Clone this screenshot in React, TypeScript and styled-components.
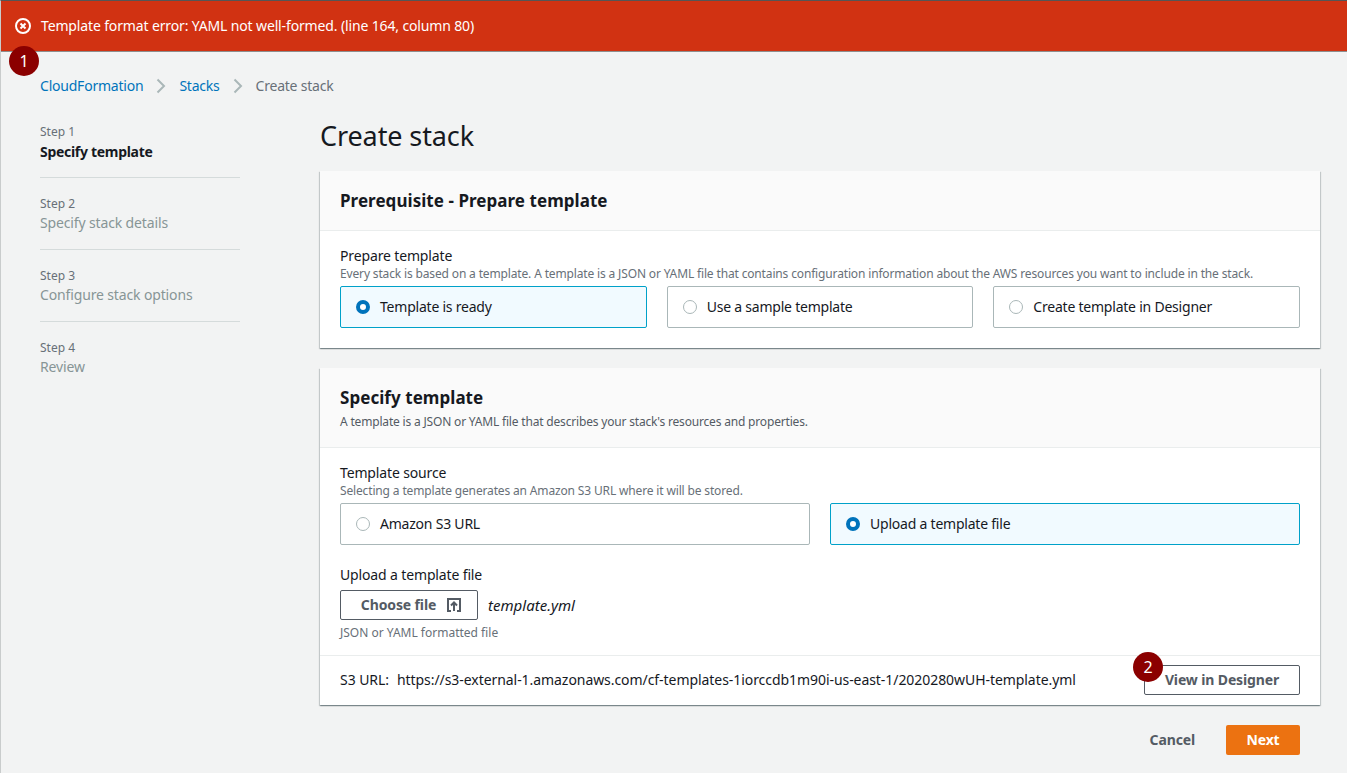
import styled, { createGlobalStyle } from "styled-components";

const GlobalStyle = createGlobalStyle`
  html, body {
    margin: 0;
    padding: 0;
    background: #f2f3f3;
  }
  body {
    font-family: "Noto Sans", "Open Sans", sans-serif;
    font-size: 14px;
    line-height: 20px;
    letter-spacing: -0.14px;
    color: #16191f;
    overflow: hidden;
  }
`;

const Page = styled.div`
  position: relative;
  width: 1347px;
  height: 773px;
  box-sizing: border-box;
  border-top: 1px solid #555;
  border-left: 1px solid #c9cccc;
  overflow: hidden;
`;

const Banner = styled.div`
  height: 51px;
  box-sizing: border-box;
  margin-left: -1px;
  padding-left: 15px;
  display: flex;
  align-items: center;
  gap: 10px;
  background: #d13212;
  border-bottom: 1px solid #8e8e8e;
  color: #fff;
`;

const Badge = styled.div<{ $left: number; $top: number }>`
  position: absolute;
  left: ${(p) => p.$left}px;
  top: ${(p) => p.$top}px;
  width: 30px;
  height: 30px;
  border-radius: 50%;
  background: #8b0000;
  color: #fff;
  font-size: 16px;
  display: flex;
  align-items: center;
  justify-content: center;
`;

const Crumbs = styled.nav`
  height: 20px;
  margin-top: 24px;
  padding-left: 39px;
  display: flex;
  align-items: center;
  letter-spacing: -0.22px;
`;

const CrumbLink = styled.a`
  color: #0073bb;
`;

const CrumbCurrent = styled.span`
  color: #687078;
`;

const CrumbSep = styled.svg`
  width: 16px;
  height: 16px;
  margin: 0 10px;
  fill: none;
  stroke: #aab7b8;
  stroke-width: 2;
`;

const Columns = styled.div`
  display: flex;
  margin-top: 15px;
  padding-left: 39px;
`;

const Steps = styled.ol`
  list-style: none;
  width: 200px;
  margin: 11px 80px 0 0;
  padding: 0;
`;

const StepItem = styled.li`
  height: 56px;
  box-sizing: border-box;
  margin-bottom: 16px;
  &:not(:last-child) {
    border-bottom: 1px solid #d5dbdb;
  }
`;

const StepNum = styled.div`
  font-size: 12px;
  line-height: 20px;
  letter-spacing: 0;
  color: #687078;
`;

const StepName = styled.div<{ $active?: boolean }>`
  margin-top: ${(p) => (p.$active ? 0 : -1)}px;
  color: ${(p) => (p.$active ? "#16191f" : "#879596")};
  font-weight: ${(p) => (p.$active ? 700 : 400)};
  letter-spacing: ${(p) => (p.$active ? "-0.3px" : "-0.14px")};
`;

const Main = styled.main`
  width: 1000px;
`;

const Title = styled.h1`
  margin: 5px 0 0;
  height: 55px;
  font-size: 27px;
  line-height: 40px;
  font-weight: 400;
  letter-spacing: -0.1px;
`;

const Card = styled.section`
  background: #fff;
  box-shadow: 0 1px 1px 0 rgba(0, 28, 36, 0.3), 1px 1px 1px 0 rgba(0, 28, 36, 0.15),
    -1px 1px 1px 0 rgba(0, 28, 36, 0.15);
  margin-bottom: 20px;
`;

const CardHeader = styled.header<{ $withDesc?: boolean }>`
  background: #fafafa;
  border-bottom: 1px solid #eaeded;
  padding: 19px 20px ${(p) => (p.$withDesc ? 15 : 18)}px;
`;

const CardTitle = styled.h2`
  margin: 0;
  font-size: 17px;
  line-height: 22px;
  font-weight: 700;
  letter-spacing: 0.05px;
`;

const CardDesc = styled.p`
  margin: 3px 0 0;
  font-size: 12px;
  line-height: 20px;
  letter-spacing: -0.18px;
  color: #545b64;
`;

const CardBody = styled.div<{ $tight?: boolean }>`
  padding: 15px 20px ${(p) => (p.$tight ? 15 : 20)}px;
`;

const FieldLabel = styled.div`
  line-height: 20px;
  margin-bottom: 1px;
`;

const UploadLabel = styled(FieldLabel)`
  margin: 20px 0 0;
`;

const FieldHint = styled.div`
  font-size: 12px;
  line-height: 14px;
  letter-spacing: -0.15px;
  color: #687078;
`;

const Tiles = styled.div<{ $cols: number }>`
  display: grid;
  grid-template-columns: repeat(${(p) => p.$cols}, 1fr);
  gap: 20px;
  margin-top: 5px;
`;

const Tile = styled.label<{ $on?: boolean }>`
  height: 42px;
  box-sizing: border-box;
  padding-left: 15px;
  display: flex;
  align-items: center;
  gap: 10px;
  letter-spacing: -0.22px;
  border: 1px solid ${(p) => (p.$on ? "#00a1c9" : "#aab7b8")};
  border-radius: 2px;
  background: ${(p) => (p.$on ? "#f1faff" : "#fff")};
`;

const Radio = styled.span<{ $on?: boolean }>`
  width: 14px;
  height: 14px;
  box-sizing: border-box;
  border-radius: 50%;
  background: #fff;
  border: ${(p) => (p.$on ? "4px solid #0073bb" : "1px solid #aab7b8")};
`;

const UploadRow = styled.div`
  display: flex;
  align-items: center;
  gap: 10px;
  margin-top: 5px;
`;

const OutlineButton = styled.button`
  height: 30px;
  box-sizing: border-box;
  background: #fff;
  border: 1px solid #545b64;
  border-radius: 2px;
  color: #545b64;
  font: 700 14px/20px "Noto Sans", "Open Sans", sans-serif;
  letter-spacing: -0.13px;
  padding: 0;
  display: flex;
  align-items: center;
  justify-content: center;
`;

const ChooseButton = styled(OutlineButton)`
  width: 138px;
  gap: 10px;
  padding-left: 5px;
`;

const DesignerButton = styled(OutlineButton)`
  width: 156px;
`;

const FileName = styled.span`
  font-size: 15px;
  font-style: italic;
  letter-spacing: 0;
`;

const UploadHint = styled(FieldHint)`
  margin-top: 6px;
  letter-spacing: 0;
`;

const UrlRow = styled.div`
  border-top: 1px solid #eaeded;
  height: 50px;
  box-sizing: border-box;
  padding: 0 20px 2px;
  display: flex;
  align-items: center;
  justify-content: space-between;
  letter-spacing: -0.06px;
`;

const UrlLabel = styled.span`
  margin-right: 8px;
`;

const Actions = styled.div`
  display: flex;
  justify-content: flex-end;
  align-items: center;
  gap: 31px;
  padding-right: 20px;
`;

const CancelButton = styled.button`
  border: 0;
  background: none;
  padding: 0;
  color: #545b64;
  font: 700 14px/20px "Noto Sans", "Open Sans", sans-serif;
  letter-spacing: -0.13px;
`;

const NextButton = styled.button`
  width: 74px;
  height: 30px;
  border: 0;
  border-radius: 2px;
  background: #ec7211;
  color: #fff;
  font: 700 14px/20px "Noto Sans", "Open Sans", sans-serif;
  letter-spacing: -0.13px;
  padding: 0;
`;

const steps = [
  { num: "Step 1", name: "Specify template", active: true },
  { num: "Step 2", name: "Specify stack details" },
  { num: "Step 3", name: "Configure stack options" },
  { num: "Step 4", name: "Review" },
];

function Chevron() {
  return (
    <CrumbSep viewBox="0 0 16 16">
      <path d="M4.5 1.5L11 8l-6.5 6.5" />
    </CrumbSep>
  );
}

export default function App() {
  return (
    <Page>
      <GlobalStyle />
      <Banner>
        <svg width="16" height="16" viewBox="0 0 16 16" fill="none" stroke="#fff" strokeWidth="2">
          <circle cx="8" cy="8" r="7" />
          <path d="M5.5 5.5l5 5M10.5 5.5l-5 5" />
        </svg>
        <span>Template format error: YAML not well-formed. (line 164, column 80)</span>
      </Banner>
      <Badge $left={8} $top={45}>1</Badge>

      <Crumbs>
        <CrumbLink>CloudFormation</CrumbLink>
        <Chevron />
        <CrumbLink>Stacks</CrumbLink>
        <Chevron />
        <CrumbCurrent>Create stack</CrumbCurrent>
      </Crumbs>

      <Columns>
        <Steps>
          {steps.map((s) => (
            <StepItem key={s.num}>
              <StepNum>{s.num}</StepNum>
              <StepName $active={s.active}>{s.name}</StepName>
            </StepItem>
          ))}
        </Steps>

        <Main>
          <Title>Create stack</Title>

          <Card>
            <CardHeader>
              <CardTitle>Prerequisite - Prepare template</CardTitle>
            </CardHeader>
            <CardBody>
              <FieldLabel>Prepare template</FieldLabel>
              <FieldHint>
                Every stack is based on a template. A template is a JSON or YAML file that contains
                configuration information about the AWS resources you want to include in the stack.
              </FieldHint>
              <Tiles $cols={3}>
                <Tile $on><Radio $on />Template is ready</Tile>
                <Tile><Radio />Use a sample template</Tile>
                <Tile><Radio />Create template in Designer</Tile>
              </Tiles>
            </CardBody>
          </Card>

          <Card>
            <CardHeader $withDesc>
              <CardTitle>Specify template</CardTitle>
              <CardDesc>A template is a JSON or YAML file that describes your stack's resources and properties.</CardDesc>
            </CardHeader>
            <CardBody $tight>
              <FieldLabel>Template source</FieldLabel>
              <FieldHint>Selecting a template generates an Amazon S3 URL where it will be stored.</FieldHint>
              <Tiles $cols={2}>
                <Tile><Radio />Amazon S3 URL</Tile>
                <Tile $on><Radio $on />Upload a template file</Tile>
              </Tiles>
              <UploadLabel>Upload a template file</UploadLabel>
              <UploadRow>
                <ChooseButton>
                  Choose file
                  <svg width="16" height="16" viewBox="0 0 16 16" fill="none" stroke="#545b64" strokeWidth="2">
                    <path d="M5 14H2V2h12v12h-3M8 14V6M5 8.5l3-3 3 3" />
                  </svg>
                </ChooseButton>
                <FileName>template.yml</FileName>
              </UploadRow>
              <UploadHint>JSON or YAML formatted file</UploadHint>
            </CardBody>
            <UrlRow>
              <span>
                <UrlLabel>S3 URL:</UrlLabel>
                https://s3-external-1.amazonaws.com/cf-templates-1iorccdb1m90i-us-east-1/2020280wUH-template.yml
              </span>
              <DesignerButton>View in Designer</DesignerButton>
            </UrlRow>
          </Card>

          <Actions>
            <CancelButton>Cancel</CancelButton>
            <NextButton>Next</NextButton>
          </Actions>
        </Main>
      </Columns>
      <Badge $left={1132} $top={651}>2</Badge>
    </Page>
  );
}
